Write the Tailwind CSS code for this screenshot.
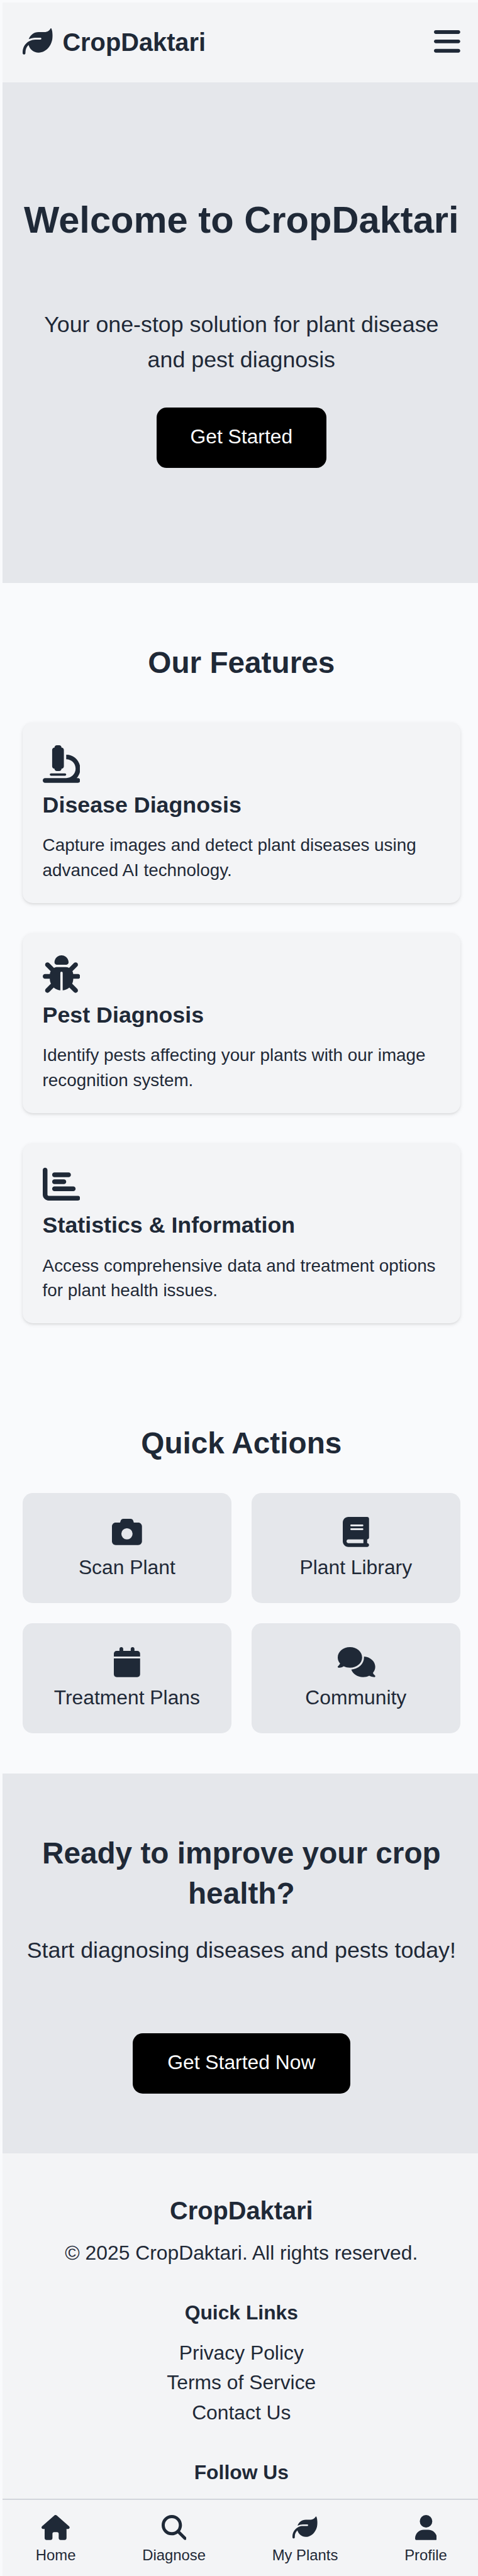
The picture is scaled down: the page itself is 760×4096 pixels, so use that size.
<!DOCTYPE html>
<html lang="en" class="text-[31.82px]">
<head>
<meta charset="utf-8">
<title>CropDaktari</title>
<script src="https://cdn.jsdelivr.net/npm/@tailwindcss/browser@4"></script>
</head>
<body class="h-[4096px] overflow-hidden bg-[#f9fafc] pt-[0.125rem] pl-[0.125rem] font-['Liberation_Sans',Arial,sans-serif] text-base text-[#1f2937]">
<svg class="hidden">
  <symbol id="leaf" viewBox="0 0 512 512"><path d="M272 96c-78.6 0-145.1 51.5-167.7 122.5c33.6-17 71.5-26.5 111.7-26.5h88c8.8 0 16 7.2 16 16s-7.2 16-16 16H216c-16.6 0-32.7 1.9-48.3 5.4c-25.9 5.9-49.9 16.4-71.4 30.7C38.3 298.8 0 364.9 0 440v16c0 13.3 10.7 24 24 24s24-10.7 24-24V440c0-48.7 20.7-92.5 53.8-123.2C121.6 392.3 190.3 448 272 448l1 0c132.1-.7 239-130.9 239-291.4c0-42.6-7.5-83.1-21.1-119.6c-2.6-6.9-12.7-6.6-16.2-.1C455.9 72.1 418.7 96 376 96L272 96z"/></symbol>
</svg>
<div class="w-[23.875rem]">
  <header class="flex h-16 items-center justify-between bg-[#f3f4f6] px-4">
    <div class="flex items-center gap-2">
      <svg class="mb-[0.125rem] size-6 fill-current"><use href="#leaf"/></svg>
      <span class="text-xl font-bold">CropDaktari</span>
    </div>
    <svg class="mb-[0.125rem] h-6 w-[1.3125rem] fill-current" viewBox="0 0 448 512"><path d="M0 96C0 78.3 14.3 64 32 64H416c17.7 0 32 14.3 32 32s-14.3 32-32 32H32C14.3 128 0 113.7 0 96zM0 256c0-17.7 14.3-32 32-32H416c17.7 0 32 14.3 32 32s-14.3 32-32 32H32c-17.7 0-32-14.3-32-32zM448 416c0 17.7-14.3 32-32 32H32c-17.7 0-32-14.3-32-32s14.3-32 32-32H416c17.7 0 32 14.3 32 32z"/></svg>
  </header>

  <section class="flex h-[25rem] flex-col items-center justify-center bg-[#e5e7eb] text-center">
    <h1 class="text-3xl font-bold whitespace-nowrap">Welcome to CropDaktari</h1>
    <p class="mt-[3.25rem] text-lg/7">Your one-stop solution for plant disease<br>and pest diagnosis</p>
    <button class="mt-6 h-12 w-[8.5rem] rounded-lg bg-black pb-[0.0625rem] text-white">Get Started</button>
  </section>

  <section class="px-4 py-12">
    <h2 class="mb-8 text-center text-2xl font-bold">Our Features</h2>
    <div class="flex flex-col gap-6">
      <article class="rounded-lg bg-[#f3f4f6] p-4 shadow-[0_2px_6px_0_rgba(0,0,0,0.1),0_2px_4px_-2px_rgba(0,0,0,0.1)]">
        <svg class="mt-[0.125rem] mb-1 size-[1.875rem] fill-current" viewBox="0 0 512 512"><path d="M160 32c0-17.7 14.3-32 32-32h32c17.7 0 32 14.3 32 32c17.7 0 32 14.3 32 32V288c0 17.7-14.3 32-32 32c0 17.7-14.3 32-32 32H192c-17.7 0-32-14.3-32-32c-17.7 0-32-14.3-32-32V64c0-17.7 14.3-32 32-32zM32 448H320c70.7 0 128-57.3 128-128s-57.3-128-128-128V128c106 0 192 86 192 192c0 49.2-18.5 94-48.9 128H480c17.7 0 32 14.3 32 32s-14.3 32-32 32H320 32c-17.7 0-32-14.3-32-32s14.3-32 32-32zm80-64H304c8.8 0 16 7.2 16 16s-7.2 16-16 16H112c-8.8 0-16-7.2-16-16s7.2-16 16-16z"/></svg>
        <h3 class="mb-2 text-lg/7 font-bold">Disease Diagnosis</h3>
        <p class="text-sm">Capture images and detect plant diseases using<br>advanced AI technology.</p>
      </article>
      <article class="rounded-lg bg-[#f3f4f6] p-4 shadow-[0_2px_6px_0_rgba(0,0,0,0.1),0_2px_4px_-2px_rgba(0,0,0,0.1)]">
        <svg class="mt-[0.125rem] mb-1 size-[1.875rem] fill-current" viewBox="0 0 512 512"><path d="M256 0c53 0 96 43 96 96v3.600c0 15.700-12.700 28.400-28.400 28.400H188.400c-15.700 0-28.400-12.700-28.400-28.400V96c0-53 43-96 96-96zM41.400 105.400c12.500-12.500 32.800-12.500 45.300 0l64 64c.7 .7 1.300 1.400 1.900 2.100c14.200-7.300 30.400-11.400 47.500-11.400H312c17.100 0 33.200 4.100 47.500 11.400c.6-.7 1.200-1.400 1.900-2.100l64-64c12.500-12.500 32.800-12.500 45.300 0s12.500 32.800 0 45.300l-64 64c-.7 .7-1.400 1.300-2.100 1.900c6.200 12 10.100 25.300 11.100 39.500H480c17.700 0 32 14.300 32 32s-14.300 32-32 32H416c0 24.600-5.500 47.800-15.400 68.600c2.200 1.300 4.200 2.900 6 4.800l64 64c12.500 12.500 12.500 32.800 0 45.300s-32.800 12.500-45.300 0l-63.100-63.100c-24.500 21.800-55.800 36.200-90.300 39.600V240c0-8.800-7.200-16-16-16s-16 7.200-16 16V479.200c-34.500-3.400-65.800-17.800-90.300-39.600L86.600 502.600c-12.500 12.500-32.800 12.500-45.300 0s-12.500-32.800 0-45.300l64-64c1.900-1.900 3.900-3.400 6-4.800C101.500 367.800 96 344.600 96 320H32c-17.700 0-32-14.300-32-32s14.300-32 32-32H96.300c1.100-14.100 5-27.500 11.100-39.500c-.7-.6-1.400-1.200-2.100-1.900l-64-64c-12.500-12.500-12.500-32.800 0-45.300z"/></svg>
        <h3 class="mb-2 text-lg/7 font-bold">Pest Diagnosis</h3>
        <p class="text-sm">Identify pests affecting your plants with our image<br>recognition system.</p>
      </article>
      <article class="rounded-lg bg-[#f3f4f6] p-4 shadow-[0_2px_6px_0_rgba(0,0,0,0.1),0_2px_4px_-2px_rgba(0,0,0,0.1)]">
        <svg class="mt-[0.125rem] mb-1 size-[1.875rem] fill-current" viewBox="0 0 512 512"><path d="M32 32c17.7 0 32 14.3 32 32V400c0 8.8 7.2 16 16 16H480c17.7 0 32 14.3 32 32s-14.3 32-32 32H80c-44.2 0-80-35.8-80-80V64C0 46.3 14.3 32 32 32zm96 96c0-17.7 14.3-32 32-32l192 0c17.7 0 32 14.3 32 32s-14.3 32-32 32H160c-17.7 0-32-14.3-32-32zm32 64H288c17.7 0 32 14.3 32 32s-14.3 32-32 32H160c-17.7 0-32-14.3-32-32s14.3-32 32-32zm0 96H416c17.7 0 32 14.3 32 32s-14.3 32-32 32H160c-17.7 0-32-14.3-32-32s14.3-32 32-32z"/></svg>
        <h3 class="mb-2 text-lg/7 font-bold">Statistics &amp; Information</h3>
        <p class="text-sm">Access comprehensive data and treatment options<br>for plant health issues.</p>
      </article>
    </div>
  </section>

  <section class="px-4 py-8">
    <h2 class="mb-6 text-center text-2xl font-bold">Quick Actions</h2>
    <div class="grid grid-cols-2 gap-4">
      <button class="flex h-22 flex-col items-center rounded-lg bg-[#e5e7eb] pt-[1.1875rem]">
        <svg class="mb-[0.28rem] size-6 fill-current" viewBox="0 0 512 512"><path d="M149.1 64.8L138.7 96H64C28.7 96 0 124.7 0 160V416c0 35.3 28.7 64 64 64H448c35.3 0 64-28.7 64-64V160c0-35.3-28.7-64-64-64H373.3L362.9 64.8C356.4 45.2 338.1 32 317.4 32H194.6c-20.7 0-39 13.2-45.5 32.8zM256 192a96 96 0 1 1 0 192 96 96 0 1 1 0-192z"/></svg>
        <span>Scan Plant</span>
      </button>
      <button class="flex h-22 flex-col items-center rounded-lg bg-[#e5e7eb] pt-[1.1875rem]">
        <svg class="mb-[0.28rem] h-6 w-[1.3125rem] fill-current" viewBox="0 0 448 512"><path d="M96 0C43 0 0 43 0 96V416c0 53 43 96 96 96H384h32c17.7 0 32-14.3 32-32s-14.3-32-32-32V384c17.7 0 32-14.3 32-32V32c0-17.7-14.3-32-32-32H384 96zm0 384H352v64H96c-17.7 0-32-14.3-32-32s14.3-32 32-32zm32-240c0-8.8 7.2-16 16-16H336c8.8 0 16 7.2 16 16s-7.2 16-16 16H144c-8.8 0-16-7.2-16-16zm16 48H336c8.8 0 16 7.2 16 16s-7.2 16-16 16H144c-8.8 0-16-7.2-16-16s7.2-16 16-16z"/></svg>
        <span>Plant Library</span>
      </button>
      <button class="flex h-22 flex-col items-center rounded-lg bg-[#e5e7eb] pt-[1.1875rem]">
        <svg class="mb-[0.28rem] h-6 w-[1.3125rem] fill-current" viewBox="0 0 448 512"><path d="M96 32V64H48C21.5 64 0 85.500 0 112v48H448V112c0-26.500-21.500-48-48-48H352V32c0-17.700-14.300-32-32-32s-32 14.300-32 32V64H160V32c0-17.700-14.300-32-32-32S96 14.300 96 32zM448 192H0V464c0 26.500 21.500 48 48 48H400c26.500 0 48-21.500 48-48V192z"/></svg>
        <span>Treatment Plans</span>
      </button>
      <button class="flex h-22 flex-col items-center rounded-lg bg-[#e5e7eb] pt-[1.1875rem]">
        <svg class="mb-[0.28rem] ml-[0.0625rem] h-6 w-[1.875rem] fill-current" viewBox="0 0 640 512"><path d="M208 352c114.900 0 208-78.800 208-176S322.900 0 208 0S0 78.800 0 176c0 38.600 14.700 74.300 39.600 103.400c-3.500 9.400-8.700 17.700-14.200 24.700c-4.800 6.200-9.700 11-13.300 14.300c-1.800 1.600-3.300 2.900-4.300 3.700c-.5 .4-.9 .7-1.100 .8l-.2 .2C1 327.200-1.400 334.400 .8 340.900S9.100 352 16 352c21.800 0 43.800-5.600 62.100-12.500c9.200-3.500 17.800-7.400 25.300-11.400C134.100 343.300 169.800 352 208 352zM448 176c0 112.300-99.100 196.900-216.500 207C255.800 457.400 336.400 512 432 512c38.200 0 73.900-8.700 104.700-23.900c7.500 4 16 7.900 25.200 11.400c18.300 6.900 40.300 12.500 62.100 12.500c6.900 0 13.100-4.500 15.200-11.100c2.100-6.600-.2-13.800-5.800-17.900l-.2-.2c-.2-.2-.6-.4-1.100-.8c-1-.8-2.500-2-4.300-3.700c-3.600-3.300-8.500-8.100-13.300-14.300c-5.500-7-10.700-15.400-14.200-24.700c24.900-29 39.600-64.700 39.600-103.400c0-92.800-84.900-168.900-192.600-175.500c.4 5.100 .6 10.300 .6 15.500z"/></svg>
        <span>Community</span>
      </button>
    </div>
  </section>

  <section class="flex h-[19rem] flex-col items-center bg-[#e5e7eb] pt-12 text-center">
    <h2 class="text-2xl font-bold">Ready to improve your crop<br>health?</h2>
    <p class="mt-4 text-lg/7 whitespace-nowrap">Start diagnosing diseases and pests today!</p>
    <button class="mt-[3.25rem] h-12 w-[10.875rem] rounded-lg bg-black pb-[0.0625rem] text-white">Get Started Now</button>
  </section>

  <footer class="h-[17.25rem] bg-[#f3f4f6] pt-8 text-center">
    <h3 class="mb-[0.46875rem] text-xl font-bold">CropDaktari</h3>
    <p>© 2025 CropDaktari. All rights reserved.</p>
    <h4 class="mt-6 mb-2 font-bold">Quick Links</h4>
    <ul>
      <li>Privacy Policy</li>
      <li>Terms of Service</li>
      <li>Contact Us</li>
    </ul>
    <h4 class="mt-6 font-bold">Follow Us</h4>
  </footer>

  <nav class="flex h-16 justify-around border-t-2 border-[#d1d5db] bg-[#f3f4f6] pt-[0.75rem] text-xs">
    <a class="flex flex-col items-center gap-1"><svg class="h-5 w-[1.40625rem] fill-current" viewBox="0 0 576 512"><path d="M575.8 255.5c0 18-15 32.1-32 32.1h-32l.7 160.2c0 2.7-.2 5.4-.5 8.1V472c0 22.1-17.9 40-40 40H456c-1.1 0-2.2 0-3.3-.1c-1.4 .1-2.8 .1-4.2 .1H416 392c-22.1 0-40-17.9-40-40V448 384c0-17.7-14.3-32-32-32H256c-17.7 0-32 14.3-32 32v64 24c0 22.1-17.9 40-40 40H160 128.100c-1.500 0-3-.1-4.500-.2c-1.200 .1-2.400 .2-3.600 .2H104c-22.100 0-40-17.900-40-40V360c0-.9 0-1.900 .1-2.800V287.600H32c-18 0-32-14-32-32.100c0-9 3-17 10-24L266.400 8c7-7 15-8 22-8s15 2 21 7L564.800 231.500c8 7 12 15 11 24z"/></svg>Home</a>
    <a class="flex flex-col items-center gap-1"><svg class="size-5 fill-current" viewBox="0 0 512 512"><path d="M416 208c0 45.900-14.900 88.300-40 122.700L502.600 457.400c12.500 12.500 12.500 32.800 0 45.300s-32.800 12.500-45.300 0L330.700 376c-34.400 25.200-76.800 40-122.700 40C93.100 416 0 322.900 0 208S93.100 0 208 0S416 93.100 416 208zM208 352a144 144 0 1 0 0-288 144 144 0 1 0 0 288z"/></svg>Diagnose</a>
    <a class="flex flex-col items-center gap-1"><svg class="size-5 fill-current"><use href="#leaf"/></svg>My Plants</a>
    <a class="flex flex-col items-center gap-1"><svg class="h-5 w-[1.09375rem] fill-current" viewBox="0 0 448 512"><path d="M224 256A128 128 0 1 0 224 0a128 128 0 1 0 0 256zm-45.700 48C79.800 304 0 383.800 0 482.300C0 498.700 13.300 512 29.700 512H418.300c16.400 0 29.700-13.300 29.700-29.700C448 383.800 368.200 304 269.700 304H178.300z"/></svg>Profile</a>
  </nav>
</div>
</body>
</html>
